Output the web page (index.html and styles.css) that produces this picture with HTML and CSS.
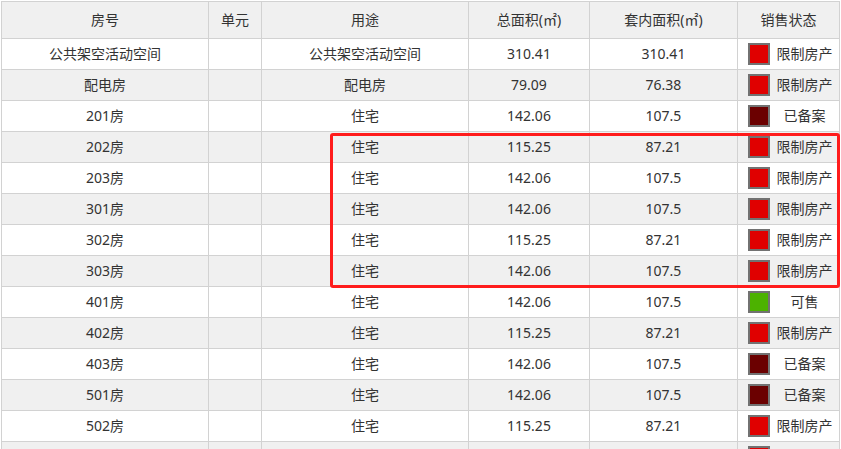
FILE: index.html
```html
<!DOCTYPE html>
<html lang="zh-CN">
<head>
<meta charset="utf-8">
<title>房号列表</title>
<link rel="stylesheet" href="styles.css">
</head>
<body>
<div class="wrap">
<table class="rooms">
<colgroup>
<col class="c1"><col class="c2"><col class="c3"><col class="c4"><col class="c5"><col class="c6">
</colgroup>
<thead>
<tr><th>房号</th><th>单元</th><th>用途</th><th>总面积(㎡)</th><th>套内面积(㎡)</th><th>销售状态</th></tr>
</thead>
<tbody>
<tr><td>公共架空活动空间</td><td></td><td>公共架空活动空间</td><td>310.41</td><td>310.41</td><td><div class="st"><i class="sq red"></i><span>限制房产</span></div></td></tr>
<tr><td>配电房</td><td></td><td>配电房</td><td>79.09</td><td>76.38</td><td><div class="st"><i class="sq red"></i><span>限制房产</span></div></td></tr>
<tr><td>201房</td><td></td><td>住宅</td><td>142.06</td><td>107.5</td><td><div class="st"><i class="sq dark"></i><span>已备案</span></div></td></tr>
<tr><td>202房</td><td></td><td>住宅</td><td>115.25</td><td>87.21</td><td><div class="st"><i class="sq red"></i><span>限制房产</span></div></td></tr>
<tr><td>203房</td><td></td><td>住宅</td><td>142.06</td><td>107.5</td><td><div class="st"><i class="sq red"></i><span>限制房产</span></div></td></tr>
<tr><td>301房</td><td></td><td>住宅</td><td>142.06</td><td>107.5</td><td><div class="st"><i class="sq red"></i><span>限制房产</span></div></td></tr>
<tr><td>302房</td><td></td><td>住宅</td><td>115.25</td><td>87.21</td><td><div class="st"><i class="sq red"></i><span>限制房产</span></div></td></tr>
<tr><td>303房</td><td></td><td>住宅</td><td>142.06</td><td>107.5</td><td><div class="st"><i class="sq red"></i><span>限制房产</span></div></td></tr>
<tr><td>401房</td><td></td><td>住宅</td><td>142.06</td><td>107.5</td><td><div class="st"><i class="sq green"></i><span>可售</span></div></td></tr>
<tr><td>402房</td><td></td><td>住宅</td><td>115.25</td><td>87.21</td><td><div class="st"><i class="sq red"></i><span>限制房产</span></div></td></tr>
<tr><td>403房</td><td></td><td>住宅</td><td>142.06</td><td>107.5</td><td><div class="st"><i class="sq dark"></i><span>已备案</span></div></td></tr>
<tr><td>501房</td><td></td><td>住宅</td><td>142.06</td><td>107.5</td><td><div class="st"><i class="sq dark"></i><span>已备案</span></div></td></tr>
<tr><td>502房</td><td></td><td>住宅</td><td>115.25</td><td>87.21</td><td><div class="st"><i class="sq red"></i><span>限制房产</span></div></td></tr>
<tr><td></td><td></td><td></td><td></td><td></td><td><div class="st"><i class="sq red"></i><span></span></div></td></tr>
</tbody>
</table>
<div class="mark"></div>
</div>
</body>
</html>
```
FILE: styles.css
```css
html, body {
  margin: 0;
  padding: 0;
  overflow: hidden;
  background: #fff;
}
.wrap {
  position: relative;
  padding: 1px 0 0 1px;
}
.rooms {
  border-collapse: collapse;
  table-layout: fixed;
  width: 838px;
  font-family: "Noto Sans", "Noto Sans CJK SC", sans-serif;
  font-size: 14px;
  color: #333;
}
.c1 { width: 207px; }
.c2 { width: 53px; }
.c3 { width: 207px; }
.c4 { width: 121px; }
.c5 { width: 148px; }
.c6 { width: 102px; }
.rooms th, .rooms td {
  border: 1px solid #d2d2d2;
  padding: 0;
  text-align: center;
  font-weight: normal;
  white-space: nowrap;
  line-height: 20px;
}
.rooms thead tr { height: 37px; }
.rooms thead th { background: #f0f0f0; }
.rooms tbody tr { height: 31px; }
.rooms tbody tr:nth-child(even) td { background: #f0f0f0; }
.st {
  display: flex;
  align-items: center;
  padding-left: 10px;
}
.st span {
  flex: 1;
  text-align: center;
}
.sq {
  display: block;
  width: 18px;
  height: 18px;
  border: 2px solid #727272;
}
.sq.red { background: #e00000; }
.sq.dark { background: #6b0000; }
.sq.green { background: #4cb200; }
.mark {
  position: absolute;
  left: 330px;
  top: 133px;
  width: 504px;
  height: 149px;
  border: 3px solid #ff1c1c;
  border-radius: 3px;
}
```
